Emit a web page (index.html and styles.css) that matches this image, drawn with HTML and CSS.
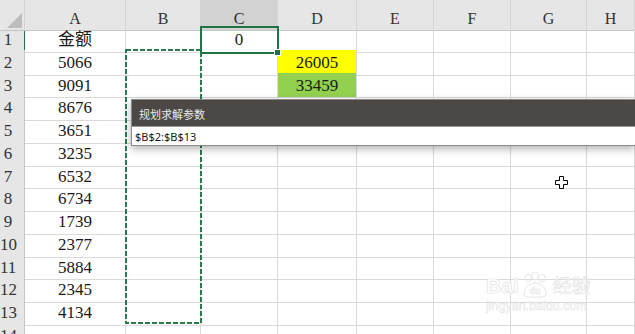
FILE: index.html
```html
<!DOCTYPE html>
<html lang="zh-CN">
<head>
    <meta charset="UTF-8">
    <title>规划求解参数</title>
    <link rel="stylesheet" href="styles.css">
</head>
<body>
    <div class="sheet">
        <div class="row head">
            <div class="corner"><span class="tri"></span></div>
            <div class="col">A</div>
            <div class="col">B</div>
            <div class="col sel">C</div>
            <div class="col">D</div>
            <div class="col">E</div>
            <div class="col">F</div>
            <div class="col">G</div>
            <div class="col">H</div>
        </div>
        <div class="row">
            <div class="num sel">1</div>
            <div class="cell">金额</div>
            <div class="cell"></div>
            <div class="cell active">0</div>
            <div class="cell"></div><div class="cell"></div><div class="cell"></div><div class="cell"></div><div class="cell"></div>
        </div>
        <div class="row">
            <div class="num">2</div>
            <div class="cell">5066</div>
            <div class="cell"></div><div class="cell"></div>
            <div class="cell yellow">26005</div>
            <div class="cell"></div><div class="cell"></div><div class="cell"></div><div class="cell"></div>
        </div>
        <div class="row">
            <div class="num">3</div>
            <div class="cell">9091</div>
            <div class="cell"></div><div class="cell"></div>
            <div class="cell green">33459</div>
            <div class="cell"></div><div class="cell"></div><div class="cell"></div><div class="cell"></div>
        </div>
        <div class="row">
            <div class="num">4</div>
            <div class="cell">8676</div>
            <div class="cell"></div><div class="cell"></div><div class="cell"></div><div class="cell"></div><div class="cell"></div><div class="cell"></div><div class="cell"></div>
        </div>
        <div class="row">
            <div class="num">5</div>
            <div class="cell">3651</div>
            <div class="cell"></div><div class="cell"></div><div class="cell"></div><div class="cell"></div><div class="cell"></div><div class="cell"></div><div class="cell"></div>
        </div>
        <div class="row">
            <div class="num">6</div>
            <div class="cell">3235</div>
            <div class="cell"></div><div class="cell"></div><div class="cell"></div><div class="cell"></div><div class="cell"></div><div class="cell"></div><div class="cell"></div>
        </div>
        <div class="row">
            <div class="num">7</div>
            <div class="cell">6532</div>
            <div class="cell"></div><div class="cell"></div><div class="cell"></div><div class="cell"></div><div class="cell"></div><div class="cell"></div><div class="cell"></div>
        </div>
        <div class="row">
            <div class="num">8</div>
            <div class="cell">6734</div>
            <div class="cell"></div><div class="cell"></div><div class="cell"></div><div class="cell"></div><div class="cell"></div><div class="cell"></div><div class="cell"></div>
        </div>
        <div class="row">
            <div class="num">9</div>
            <div class="cell">1739</div>
            <div class="cell"></div><div class="cell"></div><div class="cell"></div><div class="cell"></div><div class="cell"></div><div class="cell"></div><div class="cell"></div>
        </div>
        <div class="row">
            <div class="num">10</div>
            <div class="cell">2377</div>
            <div class="cell"></div><div class="cell"></div><div class="cell"></div><div class="cell"></div><div class="cell"></div><div class="cell"></div><div class="cell"></div>
        </div>
        <div class="row">
            <div class="num">11</div>
            <div class="cell">5884</div>
            <div class="cell"></div><div class="cell"></div><div class="cell"></div><div class="cell"></div><div class="cell"></div><div class="cell"></div><div class="cell"></div>
        </div>
        <div class="row">
            <div class="num">12</div>
            <div class="cell">2345</div>
            <div class="cell"></div><div class="cell"></div><div class="cell"></div><div class="cell"></div><div class="cell"></div><div class="cell"></div><div class="cell"></div>
        </div>
        <div class="row">
            <div class="num">13</div>
            <div class="cell">4134</div>
            <div class="cell"></div><div class="cell"></div><div class="cell"></div><div class="cell"></div><div class="cell"></div><div class="cell"></div><div class="cell"></div>
        </div>
        <div class="row">
            <div class="num">14</div>
            <div class="cell"></div><div class="cell"></div><div class="cell"></div><div class="cell"></div><div class="cell"></div><div class="cell"></div><div class="cell"></div><div class="cell"></div>
        </div>

        <!-- rango copiado B2:B13 -->
        <svg class="ants" width="78" height="276" viewBox="0 0 78 276">
            <rect x="1" y="1" width="75" height="273" fill="none" stroke="#2b7a4b" stroke-width="2" stroke-dasharray="5 2"/>
        </svg>

        <!-- cuadro de referencia -->
        <div class="dialog">
            <div class="dialog-title">规划求解参数</div>
            <div class="dialog-input">$B$2:$B$13</div>
        </div>

        <svg class="cursor" width="13" height="13" viewBox="0 0 13 13">
            <path d="M4.5 0.5h4v4h4v4h-4v4h-4v-4h-4v-4h4z" fill="#fff" stroke="#000" stroke-width="1"/>
        </svg>

        <div class="watermark">
            <div class="wm-logo">
                <span>Bai</span>
                <svg width="30" height="26" viewBox="0 0 30 26">
                    <ellipse cx="8" cy="6" rx="3" ry="4" fill="none" stroke="#e6e6e6"/>
                    <ellipse cx="15" cy="4" rx="3" ry="4" fill="none" stroke="#e6e6e6"/>
                    <ellipse cx="22" cy="6" rx="3" ry="4" fill="none" stroke="#e6e6e6"/>
                    <path d="M4 22c0-6 5-11 11-11s11 5 11 11c0 2-2 3-4 3H8c-2 0-4-1-4-3z" fill="none" stroke="#e6e6e6"/>
                    <text x="15" y="22" text-anchor="middle" font-size="9" font-family="Liberation Sans" fill="#fff" stroke="#e6e6e6" stroke-width="0.6">du</text>
                </svg>
                <span class="wm-cn">经验</span>
            </div>
            <div class="wm-url">jingyan.baidu.com</div>
        </div>
    </div>
</body>
</html>
```

FILE: styles.css
```css
body {
    margin: 0;
    padding: 0;
    background-color: #ffffff;
    overflow: hidden;
    font-family: "Liberation Serif", "Noto Sans CJK SC", serif;
}

.sheet {
    position: relative;
    width: 635px;
    height: 334px;
    overflow: hidden;
}

.row {
    display: grid;
    grid-template-columns: 25px 101px 75px 77px 79px 77px 77px 76px 48px;
    height: 22.75px;
}

.row > div {
    box-sizing: border-box;
    border-right: 1px solid #dadada;
    border-bottom: 1px solid #dadada;
    white-space: nowrap;
}

.head {
    height: 27px;
}

.head > div {
    background-color: #e6e6e6;
    border-right: 1px solid #d4d4d4;
    border-bottom: 1px solid #c6c6c6;
}

.corner {
    position: relative;
}

.tri {
    position: absolute;
    right: 2px;
    bottom: 2px;
    width: 0;
    height: 0;
    border-left: 15px solid transparent;
    border-bottom: 15px solid #bdbdbd;
}

.col {
    text-align: center;
    font-size: 16px;
    line-height: 22px;
    padding-top: 8px;
    color: #333;
}

.col.sel {
    background-color: #d2d2d2;
    color: #2d2d2d;
}

.num {
    background-color: #e6e6e6;
    text-align: center;
    padding-right: 8px;
    font-size: 17px;
    line-height: 22.75px;
    padding-top: 2px;
    color: #333;
    border-right-color: #c6c6c6 !important;
    border-bottom-color: #d2d2d2 !important;
}

.num.sel {
    border-right: 1px solid #217346 !important;
}

.cell {
    text-align: center;
    font-size: 17px;
    line-height: 22.75px;
    padding-top: 2px;
    color: #1a1a1a;
}

.yellow {
    background-color: #ffff00;
}

.green {
    background-color: #92d050;
}

.active {
    position: relative;
    outline: 2px solid #217346;
    outline-offset: -1px;
    z-index: 2;
}

.active::after {
    content: "";
    position: absolute;
    right: -4px;
    bottom: -4px;
    width: 5px;
    height: 5px;
    background-color: #217346;
    border: 1px solid #ffffff;
}

.ants {
    position: absolute;
    left: 125px;
    top: 49px;
    z-index: 3;
}

.dialog {
    position: absolute;
    left: 131px;
    top: 99px;
    width: 504px;
    background-color: #ffffff;
    border: 1px solid #8a8a8a;
    border-right: none;
    box-sizing: border-box;
    box-shadow: 0 3px 8px rgba(0, 0, 0, 0.3);
    z-index: 5;
}

.dialog-title {
    height: 26px;
    background-color: #4b4845;
    color: #e8e8e8;
    font-family: "Noto Sans CJK SC", sans-serif;
    font-size: 11px;
    line-height: 28px;
    padding-left: 7px;
    border-bottom: 1px solid #9a9a9a;
}

.dialog-input {
    height: 18px;
    font-family: "Noto Sans", "Liberation Sans", sans-serif;
    font-size: 11px;
    line-height: 19px;
    padding-left: 3px;
    color: #1a1a1a;
}

.cursor {
    position: absolute;
    left: 555px;
    top: 176px;
    z-index: 6;
}

.watermark {
    position: absolute;
    left: 486px;
    top: 262px;
    z-index: 1;
}

.wm-logo {
    display: flex;
    align-items: flex-end;
    gap: 1px;
    height: 36px;
    color: #ffffff;
    -webkit-text-stroke: 0.7px #e4e4e4;
    font-family: "Liberation Sans", sans-serif;
    font-weight: bold;
    font-size: 21px;
}

.wm-cn {
    font-family: "Noto Sans CJK SC", sans-serif;
    font-size: 19px;
    font-weight: normal;
    margin-left: 2px;
}

.wm-url {
    color: #ffffff;
    -webkit-text-stroke: 0.5px #e4e4e4;
    font-family: "Liberation Sans", sans-serif;
    font-size: 12.5px;
    margin-top: 1px;
}
```
